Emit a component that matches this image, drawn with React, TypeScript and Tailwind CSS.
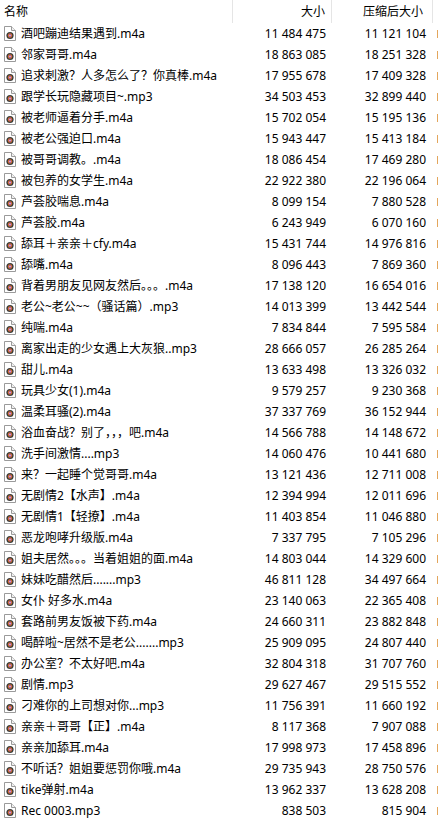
import React from 'react';

type Row = [string, string, string];

const rows: Row[] = [
  ['酒吧蹦迪结果遇到.m4a', '11 484 475', '11 121 104'],
  ['邻家哥哥.m4a', '18 863 085', '18 251 328'],
  ['追求刺激？人多怎么了？你真棒.m4a', '17 955 678', '17 409 328'],
  ['跟学长玩隐藏项目~.mp3', '34 503 453', '32 899 440'],
  ['被老师逼着分手.m4a', '15 702 054', '15 195 136'],
  ['被老公强迫口.m4a', '15 943 447', '15 413 184'],
  ['被哥哥调教。.m4a', '18 086 454', '17 469 280'],
  ['被包养的女学生.m4a', '22 922 380', '22 196 064'],
  ['芦荟胶喘息.m4a', '8 099 154', '7 880 528'],
  ['芦荟胶.m4a', '6 243 949', '6 070 160'],
  ['舔耳＋亲亲＋cfy.m4a', '15 431 744', '14 976 816'],
  ['舔嘴.m4a', '8 096 443', '7 869 360'],
  ['背着男朋友见网友然后。。。.m4a', '17 138 120', '16 654 016'],
  ['老公~老公~~（骚话篇）.mp3', '14 013 399', '13 442 544'],
  ['纯喘.m4a', '7 834 844', '7 595 584'],
  ['离家出走的少女遇上大灰狼..mp3', '28 666 057', '26 285 264'],
  ['甜儿.m4a', '13 633 498', '13 326 032'],
  ['玩具少女(1).m4a', '9 579 257', '9 230 368'],
  ['温柔耳骚(2).m4a', '37 337 769', '36 152 944'],
  ['浴血奋战？别了，，，吧.m4a', '14 566 788', '14 148 672'],
  ['洗手间激情....mp3', '14 060 476', '10 441 680'],
  ['来？一起睡个觉哥哥.m4a', '13 121 436', '12 711 008'],
  ['无剧情2【水声】.m4a', '12 394 994', '12 011 696'],
  ['无剧情1【轻撩】.m4a', '11 403 854', '11 046 880'],
  ['恶龙咆哮升级版.m4a', '7 337 795', '7 105 296'],
  ['姐夫居然。。。当着姐姐的面.m4a', '14 803 044', '14 329 600'],
  ['妹妹吃醋然后.......mp3', '46 811 128', '34 497 664'],
  ['女仆 好多水.m4a', '23 140 063', '22 365 408'],
  ['套路前男友饭被下药.m4a', '24 660 311', '23 882 848'],
  ['喝醉啦~居然不是老公.......mp3', '25 909 095', '24 807 440'],
  ['办公室？不太好吧.m4a', '32 804 318', '31 707 760'],
  ['剧情.mp3', '29 627 467', '29 515 552'],
  ['刁难你的上司想对你...mp3', '11 756 391', '11 660 192'],
  ['亲亲＋哥哥【正】.m4a', '8 117 368', '7 907 088'],
  ['亲亲加舔耳.m4a', '17 998 973', '17 458 896'],
  ['不听话？姐姐要惩罚你哦.m4a', '29 735 943', '28 750 576'],
  ['tike弹射.m4a', '13 962 337', '13 628 208'],
  ['Rec 0003.mp3', '838 503', '815 904'],
];

function AudioIcon() {
  return (
    <svg width="12" height="15" viewBox="0 0 12 15" className="shrink-0">
      <path d="M0.5 0.5 H7.5 L11.5 4.5 V14.5 H0.5 Z" fill="#fff" stroke="#9a9a9a" />
      <path d="M7.5 0.5 V4.5 H11.5" fill="#f0f0f0" stroke="#9a9a9a" />
      <circle cx="6" cy="9.5" r="3.6" fill="#3a3a3a" />
      <circle cx="6" cy="9.5" r="2.2" fill="#e07a2a" />
      <circle cx="6" cy="9.5" r="1.3" fill="#9b4fc2" />
      <circle cx="6" cy="9.5" r="0.6" fill="#fff" />
    </svg>
  );
}

export default function App() {
  return (
    <div
      className="w-[440px] h-[830px] bg-white overflow-hidden text-[12px] text-black"
      style={{ fontFamily: '"Noto Sans", "Noto Sans CJK SC", sans-serif' }}
    >
      {/* Column header */}
      <div className="flex h-[23px] items-center">
        <div className="w-[233px] shrink-0 h-full flex items-center pl-[4px] border-r border-[#e5e5e5]">
          名称
        </div>
        <div className="w-[99px] shrink-0 h-full flex items-center justify-end pr-[6px] border-r border-[#e5e5e5]">
          大小
        </div>
        <div className="w-[101px] shrink-0 h-full flex items-center justify-end pr-[9px] border-r border-[#e5e5e5]">
          压缩后大小
        </div>
        <div className="flex-1" />
      </div>

      {/* File rows */}
      {rows.map(([name, size, packed]) => (
        <div key={name} className="flex h-[21px] items-center">
          <div className="w-[233px] shrink-0 flex items-center gap-[5px] pl-[4px] whitespace-nowrap overflow-hidden">
            <AudioIcon />
            <span className="leading-none">{name}</span>
          </div>
          <div className="w-[99px] shrink-0 text-right pr-[6px] leading-none">{size}</div>
          <div className="w-[101px] shrink-0 text-right pr-[7px] leading-none">{packed}</div>
          {/* sliver of the next (cut-off) column */}
          <div className="flex-1 flex items-center pl-[4px]">
            <div className="w-[1px] h-[8px] bg-[#e3a65c]" />
          </div>
        </div>
      ))}
    </div>
  );
}
